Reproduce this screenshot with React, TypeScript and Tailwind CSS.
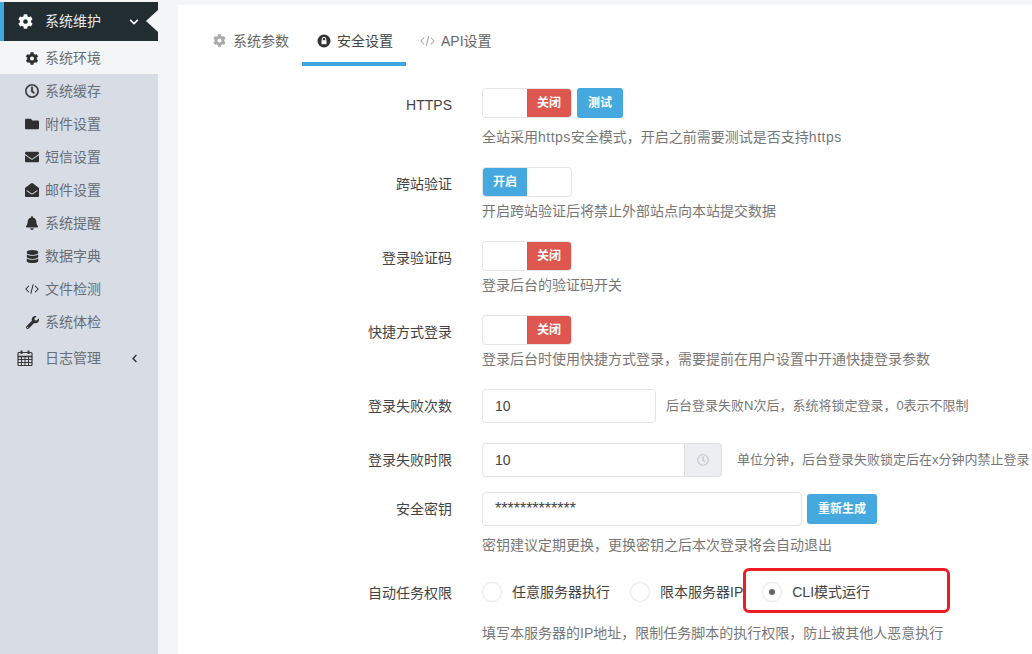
import type { ReactNode } from "react";
import {
  FaBell,
  FaChevronDown,
  FaChevronLeft,
  FaCog,
  FaDatabase,
  FaEnvelope,
  FaEnvelopeOpen,
  FaFolder,
  FaRegClock,
  FaWrench,
} from "react-icons/fa";

function CodeIcon() {
  return (
    <svg width="15" height="12" viewBox="0 0 15 12" fill="none" stroke="currentColor" strokeWidth="1.1">
      <path d="M4.2 2.5 1 6l3.2 3.5M10.8 2.5 14 6l-3.2 3.5M8.8 1 6.2 11" />
    </svg>
  );
}

function CalendarIcon() {
  return (
    <svg width="16" height="16" viewBox="0 0 16 16" fill="none" stroke="#3a3a3a" strokeWidth="1">
      <rect x="1" y="2.5" width="14" height="13" rx="1" strokeWidth="1.2" />
      <path d="M1 6.5h14" strokeWidth="1.6" />
      <path d="M1 9.5h14M1 12.5h14M4.5 6.5v9M8 6.5v9M11.5 6.5v9" />
      <path d="M4.5.5v3.5M11.5.5v3.5" strokeWidth="2" />
    </svg>
  );
}

const menu = [
  { icon: <FaRegClock size={14} stroke="currentColor" strokeWidth={12} />, label: "系统缓存" },
  { icon: <FaFolder size={14} />, label: "附件设置" },
  { icon: <FaEnvelope size={14} />, label: "短信设置" },
  { icon: <FaEnvelopeOpen size={14} />, label: "邮件设置" },
  { icon: <FaBell size={14} />, label: "系统提醒" },
  { icon: <FaDatabase size={13} />, label: "数据字典" },
  { icon: <CodeIcon />, label: "文件检测" },
  { icon: <FaWrench size={13} />, label: "系统体检" },
];

function LockCircle() {
  return (
    <svg width="14" height="14" viewBox="0 0 14 14">
      <circle cx="7" cy="7" r="6.5" fill="#333" />
      <path d="M4.5 6.2h5v4h-5z" fill="#fff" />
      <path d="M5.3 6.2V5a1.7 1.7 0 0 1 3.4 0v1.2" fill="none" stroke="#fff" strokeWidth="1" />
    </svg>
  );
}

function Sidebar() {
  return (
    <aside className="flex h-full w-[158px] shrink-0 flex-col bg-[#d8dde5] text-[14px] text-[#666e78]">
      <div className="h-[2px] shrink-0 bg-[#f4f5f7]" />
      <div className="relative flex h-[39px] shrink-0 items-center border-l-4 border-[#3fa7e0] bg-[#222d32] pl-[14px] text-[#e8eaec]">
        <FaCog size={15} className="text-white" />
        <span className="ml-[12px]">系统维护</span>
        <FaChevronDown size={10} className="absolute left-[125px] text-white" />
        <span className="absolute right-0 top-[8px] h-0 w-0 border-y-[11px] border-r-[12px] border-y-transparent border-r-[#f4f5f7]" />
      </div>
      <div className="flex h-[33px] shrink-0 items-center bg-[#f4f5f7] pl-[25px] pt-[1px]">
        <FaCog size={13} className="w-[14px] text-[#2f2f2f]" />
        <span className="ml-[6px]">系统环境</span>
      </div>
      {menu.map((item) => (
        <div key={item.label} className="flex h-[33px] shrink-0 items-center pl-[25px] pt-[1px]">
          <span className="flex w-[14px] justify-center text-[#2f2f2f]">{item.icon}</span>
          <span className="ml-[6px]">{item.label}</span>
        </div>
      ))}
      <div className="flex h-[40px] shrink-0 items-center pl-[17px]">
        <CalendarIcon />
        <span className="ml-[12px]">日志管理</span>
        <FaChevronLeft size={9} className="ml-[29px] text-[#2f2f2f]" />
      </div>
    </aside>
  );
}

function Tabs() {
  return (
    <div className="flex h-[61px] items-stretch pl-[35px] text-[14px]">
      <div className="flex w-[89px] items-start gap-[6px] pt-[26px] text-[#666]">
        <span className="mt-[3px] text-[#aaa]"><FaCog size={13} /></span>
        <span className="ml-[1px]">系统参数</span>
      </div>
      <div className="flex w-[104px] items-start justify-center gap-[6px] border-b-4 border-[#3fa7e0] pl-[2px] pt-[26px] text-[#444]">
        <span className="mt-[3px]"><LockCircle /></span>
        <span>安全设置</span>
      </div>
      <div className="flex items-start gap-[6px] pl-[14px] pt-[26px] text-[#666]">
        <span className="mt-[4px] text-[#aaa]"><CodeIcon /></span>
        <span>API设置</span>
      </div>
    </div>
  );
}

function Label({ children, className = "" }: { children: ReactNode; className?: string }) {
  return (
    <div className={`w-[274px] shrink-0 text-right text-[14px] text-[#444] ${className}`}>{children}</div>
  );
}

function Help({ children, className = "" }: { children: ReactNode; className?: string }) {
  return <p className={`leading-[20px] whitespace-nowrap text-[#777] ${className}`}>{children}</p>;
}

function Toggle({ on }: { on: boolean }) {
  return (
    <div className="flex h-[30px] w-[90px] overflow-hidden rounded-[4px] border border-[#e2e4e8] bg-white text-[12px] font-bold text-white">
      {on ? (
        <>
          <span className="flex w-[44px] items-center justify-center bg-[#45a9e0]">开启</span>
          <span className="flex-1" />
        </>
      ) : (
        <>
          <span className="flex-1" />
          <span className="flex w-[44px] items-center justify-center bg-[#dd5650]">关闭</span>
        </>
      )}
    </div>
  );
}

function ToggleRow({ label, on, help, extra, className = "", helpClass = "mt-[4px]" }: { label: string; on: boolean; help: ReactNode; extra?: ReactNode; className?: string; helpClass?: string }) {
  return (
    <div className={`flex ${className}`}>
      <Label className="pt-[7px]">{label}</Label>
      <div className="ml-[30px]">
        <div className="flex gap-[5px]">
          <Toggle on={on} />
          {extra}
        </div>
        <Help className={`text-[14px] ${helpClass}`}>{help}</Help>
      </div>
    </div>
  );
}

function Radio({ checked, label, className = "" }: { checked?: boolean; label: string; className?: string }) {
  return (
    <label className={`flex items-center text-[14px] text-[#444] ${className}`}>
      <span className="flex h-[20px] w-[20px] shrink-0 items-center justify-center rounded-full border border-[#e4e6ea] bg-white">
        {checked && <span className="h-[6px] w-[6px] rounded-full bg-[#666]" />}
      </span>
      <span className="ml-[10px] whitespace-nowrap">{label}</span>
    </label>
  );
}

function Form() {
  const input = "flex h-[34px] items-center rounded-[4px] border border-[#e2e4e8] bg-white pl-[12px] text-[#444]";
  return (
    <div className="relative pt-[22px]">
      <ToggleRow
        label="HTTPS"
        on={false}
        help={
          <>
            全站采用<span className="tracking-[0.5px]">https</span>安全模式，开启之前需要测试是否支持<span className="tracking-[0.5px]">https</span>
          </>
        }
        helpClass="mt-[9px]"
        extra={
          <button className="h-[30px] w-[46px] rounded-[3px] bg-[#45a9e0] text-[12px] font-bold text-white">测试</button>
        }
      />
      <ToggleRow label="跨站验证" on help="开启跨站验证后将禁止外部站点向本站提交数据" className="mt-[20px]" />
      <ToggleRow label="登录验证码" on={false} help="登录后台的验证码开关" className="mt-[20px]" />
      <ToggleRow label="快捷方式登录" on={false} help="登录后台时使用快捷方式登录，需要提前在用户设置中开通快捷登录参数" className="mt-[20px]" />

      <div className="mt-[20px] flex items-center">
        <Label>登录失败次数</Label>
        <div className={`ml-[30px] w-[174px] text-[14px] ${input}`}>10</div>
        <Help className="ml-[10px] text-[13px]">后台登录失败N次后，系统将锁定登录，0表示不限制</Help>
      </div>

      <div className="mt-[20px] flex items-center">
        <Label>登录失败时限</Label>
        <div className="ml-[30px] flex w-[240px]">
          <div className={`flex-1 rounded-r-none border-r-0 text-[14px] ${input}`}>10</div>
          <span className="flex h-[34px] w-[38px] items-center justify-center rounded-r-[4px] border border-[#dcdfe3] bg-[#eceef1] text-[#c3c8ce]">
            <FaRegClock size={12} />
          </span>
        </div>
        <Help className="ml-[15px] text-[13px]">单位分钟，后台登录失败锁定后在x分钟内禁止登录</Help>
      </div>

      <div className="mt-[15px] flex">
        <Label className="pt-[7px]">安全密钥</Label>
        <div className="ml-[30px]">
          <div className="flex items-center gap-[5px]">
            <div className={`w-[320px] text-[16px] ${input}`}>*************</div>
            <button className="h-[30px] w-[70px] rounded-[3px] bg-[#45a9e0] text-[12px] font-bold text-white">重新生成</button>
          </div>
          <Help className="mt-[9px] text-[14px]">密钥建议定期更换，更换密钥之后本次登录将会自动退出</Help>
        </div>
      </div>

      <div className="mt-[27px] flex">
        <Label className="pt-[1px]">自动任务权限</Label>
        <div className="ml-[30px]">
          <div className="flex h-[20px] items-center">
            <Radio label="任意服务器执行" />
            <Radio label="限本服务器IP" className="ml-[20px]" />
            <Radio checked label="CLI模式运行" className="ml-[19px]" />
          </div>
          <Help className="mt-[21px] text-[14px]">填写本服务器的IP地址，限制任务脚本的执行权限，防止被其他人恶意执行</Help>
        </div>
      </div>

      {/* red annotation around the CLI radio */}
      <div className="absolute left-[565px] top-[502px] h-[45px] w-[207px] rounded-[6px] border-[3px] border-[#ee1c25]" />
    </div>
  );
}

export default function App() {
  return (
    <div className="flex h-[654px] w-[1032px] overflow-hidden bg-[#f4f5f7] font-['Liberation_Sans','Noto_Sans_CJK_SC',sans-serif]">
      <Sidebar />
      <main className="ml-[20px] mt-[5px] flex-1 bg-white">
        <Tabs />
        <Form />
      </main>
    </div>
  );
}
